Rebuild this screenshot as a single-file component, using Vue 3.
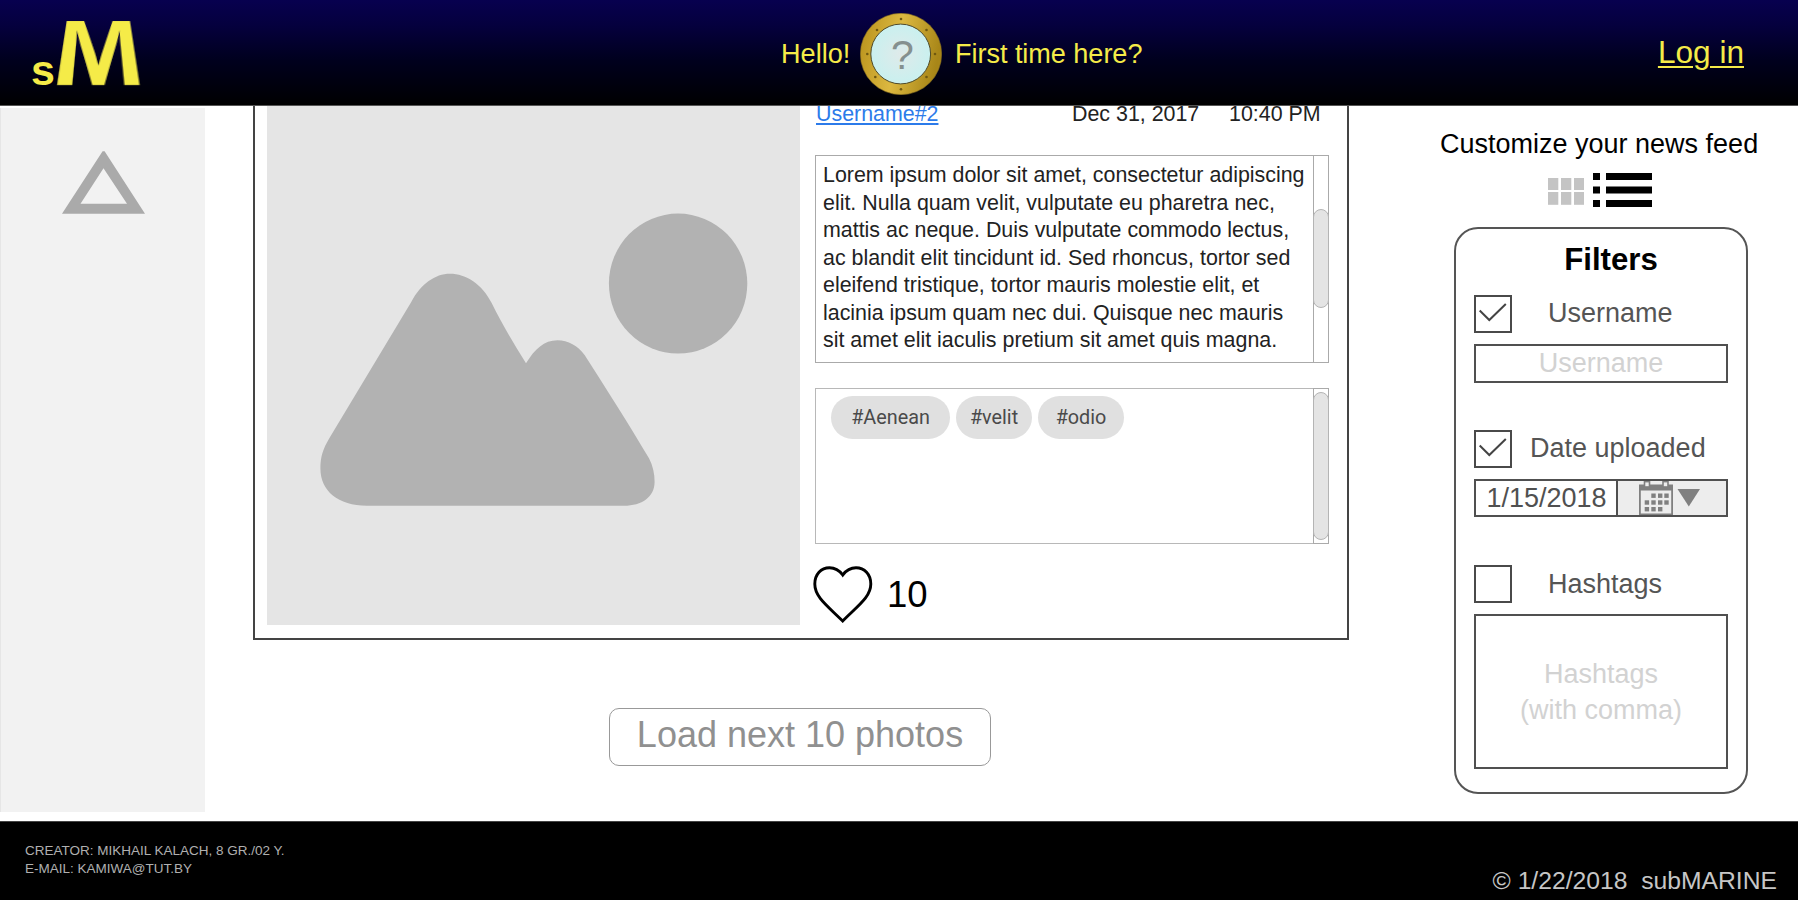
<script setup>
const postLines = [
  'Lorem ipsum dolor sit amet, consectetur adipiscing',
  'elit. Nulla quam velit, vulputate eu pharetra nec,',
  'mattis ac neque. Duis vulputate commodo lectus,',
  'ac blandit elit tincidunt id. Sed rhoncus, tortor sed',
  'eleifend tristique, tortor mauris molestie elit, et',
  'lacinia ipsum quam nec dui. Quisque nec mauris',
  'sit amet elit iaculis pretium sit amet quis magna.'
]
const tags = [
  { text: '#Aenean', cls: 'chip-lg' },
  { text: '#velit', cls: 'chip-sm' },
  { text: '#odio', cls: 'chip-md' }
]
const rivets = [
  [41, 6], [66.5, 17], [75, 41], [66.5, 64], [41, 76.3], [15.3, 64], [7.3, 41], [17, 17]
]
const calendarDots = [
  [12.3, 12.5], [19, 12.5], [25.3, 12.5],
  [5.7, 19.3], [12.3, 19.3], [19, 19.3], [25.3, 19.3],
  [5.7, 26], [12.3, 26], [19, 26]
]
</script>

<template>
  <div class="page">
    <header class="topbar">
      <div class="logo">
        <span class="logo-s">s</span>
        <span class="logo-m">M</span>
      </div>
      <div class="welcome">
        <span class="hello">Hello!</span>
        <svg class="porthole" width="82" height="82" viewBox="0 0 82 82">
          <defs>
            <linearGradient id="brass" x1="0" y1="0.1" x2="1" y2="0.3">
              <stop offset="0" stop-color="#b8921c" />
              <stop offset="0.5" stop-color="#dcb840" />
              <stop offset="1" stop-color="#a88618" />
            </linearGradient>
            <radialGradient id="glass">
              <stop offset="0" stop-color="#dfeaea" />
              <stop offset="1" stop-color="#c9f0ef" />
            </radialGradient>
          </defs>
          <circle cx="41" cy="41" r="40.7" fill="url(#brass)" stroke="#8a7020" stroke-width="0.6" />
          <circle cx="40.7" cy="41" r="29.9" fill="url(#glass)" stroke="#4f4a2a" stroke-width="1" />
          <circle v-for="(r, i) in rivets" :key="i" :cx="r[0]" :cy="r[1]" r="1.3" fill="#6f5810" />
          <text x="42.3" y="55.800" text-anchor="middle" class="question">?</text>
        </svg>
        <span class="first">First time here?</span>
      </div>
      <a class="login">Log in</a>
    </header>

    <main class="main">
      <nav class="rail">
        <svg width="84" height="64" viewBox="0 0 84 64">
          <path d="M40.6 0.3H42.6L83 62.8H0Z M41.5 17.3L18.5 52.8H65Z" fill="#aaa" fill-rule="evenodd" />
        </svg>
      </nav>

      <section class="feed">
        <article class="card">
          <svg class="photo" width="533" height="519" viewBox="267 106 533 519">
            <rect x="267" y="106" width="533" height="519" fill="#e5e5e5" />
            <ellipse cx="678.1" cy="283.600" rx="69.2" ry="70" fill="#b2b2b2" />
            <path
              d="M411.4 301.7C421 284 435 273.8 450 273.8C466 273.8 482 284 491.8 303.3C501 322 513 343 526 363.3C535 349 544 340.3 557.5 340.3C568 340.3 578 346 584.6 355C605 387 630 426 649 458.3C653 466 654.6 474 654.6 481.7C654.6 497 642 505.7 624 505.7H367C338 505.7 320.4 491 320.4 468.3C320.4 457 323 449 329.3 438.3Z"
              fill="#b2b2b2"
            />
          </svg>
          <div class="details">
            <div class="meta">
              <a class="author">Username#2</a>
              <span class="date">Dec 31, 2017</span>
              <span class="time">10:40 PM</span>
            </div>
            <div class="box description">
              <div class="copy">
                <div v-for="line in postLines" :key="line">{{ line }}</div>
              </div>
              <div class="track"><div class="thumb thumb-mid"></div></div>
            </div>
            <div class="box tags">
              <div class="chips">
                <span v-for="t in tags" :key="t.text" class="chip" :class="t.cls">{{ t.text }}</span>
              </div>
              <div class="track"><div class="thumb thumb-full"></div></div>
            </div>
            <div class="likes">
              <svg width="60" height="57" viewBox="0 0 60 57">
                <path
                  d="M29.700 9C26 4 21 1.800 16.500 1.800C8 1.800 1.800 8.500 1.800 18C1.800 31 14 39.500 29.700 55C45 39.500 57.800 31 57.800 18C57.800 8.500 51.500 1.800 43 1.800C38 1.800 33.500 4 29.700 9Z"
                  fill="none" stroke="#000" stroke-width="2.900"
                />
              </svg>
              <span>10</span>
            </div>
          </div>
        </article>
        <button class="load">Load next 10 photos</button>
      </section>

      <aside class="side">
        <div class="side-title">Customize your news feed</div>
        <svg class="views" width="104" height="34" viewBox="0 0 104 34">
          <g fill="#c4c4c4">
            <rect x="0" y="5" width="10.3" height="12" />
            <rect x="13" y="5" width="10.3" height="12" />
            <rect x="26" y="5" width="10" height="12" />
            <rect x="0" y="19" width="10.3" height="12.800" />
            <rect x="13" y="19" width="10.3" height="12.800" />
            <rect x="26" y="19" width="10" height="12.800" />
          </g>
          <path d="M45 0h7v7h-7zM58 0h46v7h-46zM45 13.600h7v7h-7zM58 13.600h46v7h-46zM45 27h7v7h-7zM58 27h46v7h-46z" fill="#000" />
        </svg>
        <div class="filters">
          <h2>Filters</h2>
          <div class="row">
            <span class="check">
              <svg width="34" height="34" viewBox="0 0 34 34"><path d="M3.700 13.500L13.300 23L29.800 7" fill="none" stroke="#444" stroke-width="2" /></svg>
            </span>
            <span class="label indent">Username</span>
          </div>
          <div class="field">Username</div>
          <div class="row second">
            <span class="check">
              <svg width="34" height="34" viewBox="0 0 34 34"><path d="M3.700 13.500L13.300 23L29.800 7" fill="none" stroke="#444" stroke-width="2" /></svg>
            </span>
            <span class="label">Date uploaded</span>
          </div>
          <div class="field datefield">
            <span class="value">1/15/2018</span>
            <span class="picker">
              <svg width="62" height="34" viewBox="0 0 62 34">
                <path d="M0 3.500H34V34H0Z M1.800 9.500V32.500H32.200V9.500Z" fill="#808080" fill-rule="evenodd" />
                <rect x="5.500" y="0.600" width="5" height="5.400" fill="#ededed" stroke="#808080" stroke-width="1.600" />
                <rect x="24" y="0.600" width="5" height="5.400" fill="#ededed" stroke="#808080" stroke-width="1.600" />
                <rect v-for="(d, i) in calendarDots" :key="i" :x="d[0]" :y="d[1]" width="4.400" height="4.400" fill="#808080" />
                <path d="M38.500 8H61L49.800 25.500Z" fill="#808080" />
              </svg>
            </span>
          </div>
          <div class="row third">
            <span class="check"></span>
            <span class="label indent low">Hashtags</span>
          </div>
          <div class="field area"><span>Hashtags<br />(with comma)</span></div>
        </div>
      </aside>
    </main>

    <footer class="foot">
      <div class="creator">CREATOR: MIKHAIL KALACH, 8 GR./02 Y.<br />E-MAIL: KAMIWA@TUT.BY</div>
      <div class="copyright">© 1/22/2018&nbsp; subMARINE</div>
    </footer>
  </div>
</template>

<style>
body {
  margin: 0;
  background: #fff;
}
</style>

<style scoped>
.page {
  width: 1798px;
  height: 900px;
  display: flex;
  flex-direction: column;
  overflow: hidden;
  font-family: 'Liberation Sans', Arial, sans-serif;
  white-space: nowrap;
}
.page * {
  box-sizing: border-box;
}
.topbar {
  height: 106px;
  flex: none;
  display: flex;
  align-items: center;
  padding: 2px 54px 0 32px;
  background: linear-gradient(#07004f 0, #05003e 25px, #00001e 60px, #000004 100px, #000 105px);
  border-bottom: 1px solid #555;
  color: #f5eb48;
}
.logo {
  width: 120px;
  height: 92px;
  margin-top: -2px;
  display: flex;
  align-items: baseline;
  font-weight: 700;
}
.logo-s {
  width: 28px;
  margin-left: -1px;
  font-size: 43px;
}
/* Wide-footed capital: a projective transform narrows the letter towards its top. */
.logo-m {
  width: 77px;
  margin-left: 1px;
  font-size: 92px;
  line-height: 92px;
  transform-origin: 38.300px 77.900px;
  transform: matrix3d(1.28, 0, 0, 0, 0, 1.3, 0, -0.00474, 0, 0, 1, 0, 0, 0, 0, 1);
}
.welcome {
  display: flex;
  align-items: center;
  margin-left: 629px;
  font-size: 27.1px;
}
.hello {
  width: 79px;
}
.first {
  margin-left: 13px;
  letter-spacing: -0.05px;
}
.question {
  font-size: 41px;
  fill: #85908f;
}
.login {
  margin: 0 0 3px auto;
  font-size: 31.6px;
  text-decoration: underline;
  text-decoration-thickness: 2px;
  text-underline-offset: 3px;
}
.main {
  height: 715px;
  flex: none;
  display: flex;
}
.rail {
  width: 205px;
  height: 704px;
  margin-top: 2px;
  padding: 43px 0 0 61px;
  border-left: 1px solid #e6e6e6;
  background: #f2f2f2;
}
.feed {
  width: 1096px;
  margin-left: 48px;
  display: flex;
  flex-direction: column;
}
.card {
  height: 534px;
  border: 2px solid #444;
  border-top: 0;
  padding-left: 12px;
  display: flex;
  overflow: hidden;
}
.photo {
  flex: none;
}
.details {
  width: 514px;
  margin-left: 15px;
  color: #222;
  font-size: 21.400px;
}
.meta {
  height: 24px;
  margin-top: -4px;
  padding-left: 1px;
  line-height: 24px;
  display: flex;
}
.author {
  width: 256px;
  color: #2c7bea;
  text-decoration: underline;
  text-decoration-thickness: 1.5px;
  text-underline-offset: 2px;
}
.date {
  width: 157px;
}
.box {
  border: 1px solid #aaa;
  display: flex;
  justify-content: space-between;
}
.description {
  height: 208px;
  margin-top: 29px;
}
.copy {
  padding: 6.400px 0 0 7px;
  line-height: 27.500px;
}
.track {
  width: 16px;
  margin: -1px;
  border: 1px solid #aaa;
}
.thumb {
  width: 16px;
  margin-left: -1px;
  border: 1px solid #b4b4b4;
  border-radius: 8px;
  background: #e4e4e4;
}
.thumb-mid {
  height: 99px;
  margin-top: 53px;
}
.thumb-full {
  height: 148px;
  margin-top: 3px;
}
.tags {
  height: 156px;
  margin-top: 25px;
  border-color: #b8b8b8;
}
.chips {
  display: flex;
  gap: 6px;
  padding: 7px 0 0 15px;
}
.chip {
  height: 43px;
  border-radius: 22px;
  background: #e0e0e0;
  color: #4a4a4a;
  font: 19.800px/43px Roboto, sans-serif;
  text-align: center;
}
.chip-lg {
  width: 119px;
}
.chip-sm {
  width: 76px;
}
.chip-md {
  width: 86px;
}
.likes {
  display: flex;
  align-items: center;
  margin: 22px 0 0 -2px;
  color: #000;
  font-size: 36.500px;
}
.likes span {
  margin: 1px 0 0 14px;
}
.load {
  width: 382px;
  height: 58px;
  margin: 68px 0 0 356px;
  padding: 0 0 4px;
  border: 1px solid #999;
  border-radius: 10px;
  background: #fff;
  color: #909090;
  font: 36px 'Liberation Sans', Arial, sans-serif;
}
.side {
  width: 317px;
  margin-left: 91px;
  display: flex;
  flex-direction: column;
}
.side-title {
  height: 30px;
  margin-top: 22px;
  line-height: 33px;
  font-size: 27px;
}
.views {
  margin: 15px 0 0 108px;
}
.filters {
  width: 294px;
  height: 567px;
  margin: 20px 0 0 14px;
  padding: 0 18px;
  border: 2px solid #555;
  border-radius: 24px;
  color: #555;
  font-size: 27px;
}
h2 {
  height: 36px;
  margin: 12px 0 0 20px;
  color: #000;
  font-size: 31.200px;
  line-height: 38px;
  text-align: center;
}
.row {
  height: 38px;
  margin-top: 18px;
  display: flex;
  align-items: center;
}
.check {
  width: 38px;
  height: 38px;
  border: 2px solid #4a4a4a;
}
.check svg {
  display: block;
}
.label {
  margin: -1px 0 0 18px;
}
.indent {
  margin-left: 36px;
}
.low {
  margin-top: 1px;
}
.second {
  margin-top: 47px;
}
.third {
  margin-top: 48px;
}
.field {
  height: 39px;
  margin-top: 11px;
  border: 2px solid #505050;
  color: #d2d2d2;
  line-height: 34px;
  text-align: center;
}
.datefield {
  height: 38px;
  display: flex;
  color: #505050;
}
.value {
  width: 142px;
  padding-left: 1px;
  border-right: 2px solid #505050;
}
.picker {
  flex: 1;
  padding-left: 21px;
  background: #ededed;
}
.picker svg {
  display: block;
}
.area {
  height: 155px;
  display: flex;
  justify-content: center;
  padding-top: 40px;
  line-height: 36px;
}
.foot {
  height: 79px;
  flex: none;
  display: flex;
  justify-content: space-between;
  padding: 0 21px 0 25px;
  border-top: 1px solid #444;
  background: #000;
}
.creator {
  padding-top: 20px;
  color: #b0b0b0;
  font-size: 13.500px;
  line-height: 18.300px;
}
.copyright {
  padding-top: 44px;
  color: #c6c6c6;
  font-size: 24.700px;
  line-height: 30px;
}
</style>
